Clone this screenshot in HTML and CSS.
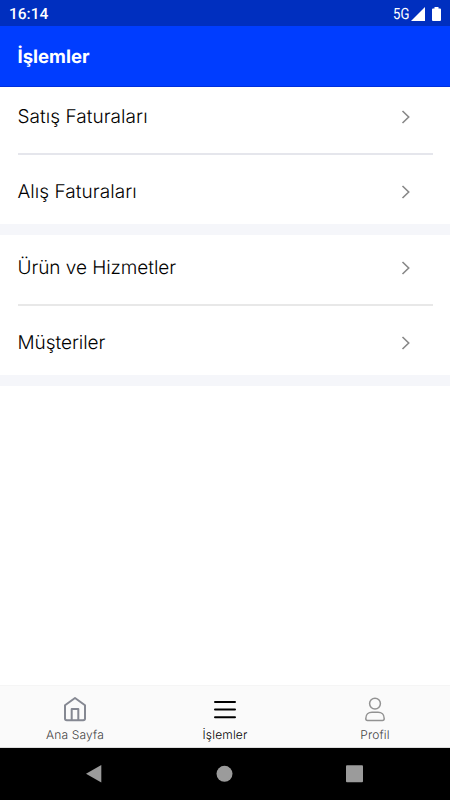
FILE: index.html
```html
<!DOCTYPE html>
<html lang="tr">

<head>
    <meta charset="UTF-8">
    <meta name="viewport" content="width=device-width, initial-scale=1.0">
    <title>İşlemler</title>
    <link rel="stylesheet" href="styles.css">
</head>

<body>
    <div class="status-bar">
        <span class="clock">16:14</span>
        <div class="status-icons">
            <span class="network">5G</span>
            <svg class="signal" width="14" height="14" viewBox="0 0 14 14">
                <path d="M14 0v14H0z" />
            </svg>
            <svg class="battery" width="9" height="14" viewBox="0 0 9 14">
                <path d="M2.5 0h4v1.4H8q1 0 1 1V13q0 1-1 1H1q-1 0-1-1V2.4q0-1 1-1h1.5z" />
            </svg>
        </div>
    </div>

    <header class="header">
        <h1>İşlemler</h1>
    </header>

    <main class="content">
        <div class="group invoices">
            <a class="row">
                <span>Satış Faturaları</span>
                <svg class="chevron" width="9" height="14" viewBox="0 0 9 14"><path d="M1.5 1l6.200 6-6.200 6" /></svg>
            </a>
            <a class="row">
                <span>Alış Faturaları</span>
                <svg class="chevron" width="9" height="14" viewBox="0 0 9 14"><path d="M1.5 1l6.200 6-6.200 6" /></svg>
            </a>
        </div>
        <div class="group records">
            <a class="row">
                <span>Ürün ve Hizmetler</span>
                <svg class="chevron" width="9" height="14" viewBox="0 0 9 14"><path d="M1.5 1l6.200 6-6.200 6" /></svg>
            </a>
            <a class="row">
                <span>Müşteriler</span>
                <svg class="chevron" width="9" height="14" viewBox="0 0 9 14"><path d="M1.5 1l6.200 6-6.200 6" /></svg>
            </a>
        </div>
    </main>

    <nav class="tabs">
        <a class="tab home">
            <svg width="24" height="26" viewBox="0 0 24 26">
                <path d="M2 9.2L12 2l10 7.2v13.3q0 1.8-1.8 1.8H3.8Q2 24.3 2 22.5z" />
                <path d="M8.7 24V13h6.6v11" />
            </svg>
            <span>Ana Sayfa</span>
        </a>
        <a class="tab active">
            <svg width="24" height="26" viewBox="0 0 24 26">
                <path d="M2 6h20M2 13.5h20M2 21.2h20" />
            </svg>
            <span>İşlemler</span>
        </a>
        <a class="tab">
            <svg width="24" height="26" viewBox="0 0 24 26">
                <circle cx="12" cy="7.6" r="5.4" />
                <path d="M2.8 22.5C2.8 18.5 5.5 16.3 9 16.3h6c3.5 0 6.2 2.2 6.2 6.2q0 2-1.7 2h-15q-1.7 0-1.7-2z" />
            </svg>
            <span>Profil</span>
        </a>
    </nav>

    <div class="system-nav">
        <svg width="18" height="20" viewBox="0 0 18 20"><path d="M16.3 1v17.6L1 9.8z" /></svg>
        <svg width="18" height="20" viewBox="0 0 18 20"><circle cx="9.5" cy="9.8" r="8" /></svg>
        <svg width="18" height="20" viewBox="0 0 18 20"><rect x="1" y="1.3" width="17" height="17" rx="1" /></svg>
    </div>
</body>

</html>
```

FILE: styles.css
```css
* {
    box-sizing: border-box;
}

body {
    margin: 0;
    height: 100vh;
    display: flex;
    flex-direction: column;
    background-color: #ffffff;
    font-family: "Inter", sans-serif;
    color: #000000;
    text-rendering: geometricPrecision;
    overflow: hidden;
}

svg {
    display: block;
}

.status-bar {
    display: flex;
    justify-content: space-between;
    align-items: center;
    height: 26px;
    padding: 1px 9px 0;
    background-color: #002fbf;
    color: #ffffff;
    font-family: "Roboto", sans-serif;
}

.clock {
    font-size: 15.5px;
    font-weight: 500;
}

.status-icons {
    display: flex;
    align-items: center;
}

.status-icons svg {
    fill: #ffffff;
}

.network {
    width: 16px;
    margin-right: 2px;
    font-size: 15.5px;
    transform: scaleX(0.85);
    transform-origin: left;
}

.battery {
    margin-left: 7px;
}

.header {
    display: flex;
    align-items: center;
    height: 61px;
    padding: 2px 17.5px 0;
    background-color: #003dff;
    border-bottom: 1px solid #0030dc;
}

h1 {
    margin: 0;
    font-size: 18.5px;
    font-weight: 700;
    color: #ffffff;
}

.content {
    flex: 1;
}

.group {
    padding: 0 17.5px;
    border-bottom: 11px solid #f5f6fa;
}

.row {
    display: flex;
    justify-content: space-between;
    align-items: center;
    height: 73px;
    padding-right: 22.5px;
    font-size: 19px;
    font-weight: 300;
}

.invoices {
    height: 148px;
}

.invoices .row {
    letter-spacing: 0.05px;
}

.invoices .row:first-child {
    height: 68px;
    padding-bottom: 7px;
    border-bottom: 2px solid #e5e6ec;
}

.invoices .row:last-child {
    height: 74px;
    padding-bottom: 1px;
}

.invoices .row:last-child .chevron {
    margin-top: 1px;
}

.records {
    height: 151px;
}

.records .row {
    height: 75px;
    letter-spacing: -0.05px;
}

.records .row:first-child {
    height: 71px;
    padding-bottom: 4px;
    border-bottom: 2px solid #e8e8e8;
}

.records .row:last-child {
    height: 73px;
}

.chevron {
    fill: none;
    stroke: #888888;
    stroke-width: 1.6;
}

.tabs {
    display: flex;
    height: 63px;
    background-color: #fafafa;
    border-top: 1px solid #f5f5f5;
    border-bottom: 1px solid #dddddd;
}

.tab {
    flex: 1;
    display: flex;
    flex-direction: column;
    align-items: center;
    padding-top: 10px;
    font-size: 12px;
    font-weight: 300;
    letter-spacing: 0.15px;
    color: #444444;
}

.tab span {
    margin-top: 5px;
}

.tab svg {
    fill: none;
    stroke: #929292;
    stroke-width: 1.5;
    stroke-linecap: round;
    stroke-linejoin: round;
}

.home svg {
    stroke: #858892;
    stroke-width: 2;
}

.active {
    color: #000000;
}

.active svg {
    stroke: #000000;
    stroke-width: 2;
}

.system-nav {
    display: flex;
    justify-content: space-between;
    height: 52px;
    padding: 16px 87px 0 85px;
    background-color: #000000;
}

.system-nav svg {
    fill: #9b9b9b;
}
```
